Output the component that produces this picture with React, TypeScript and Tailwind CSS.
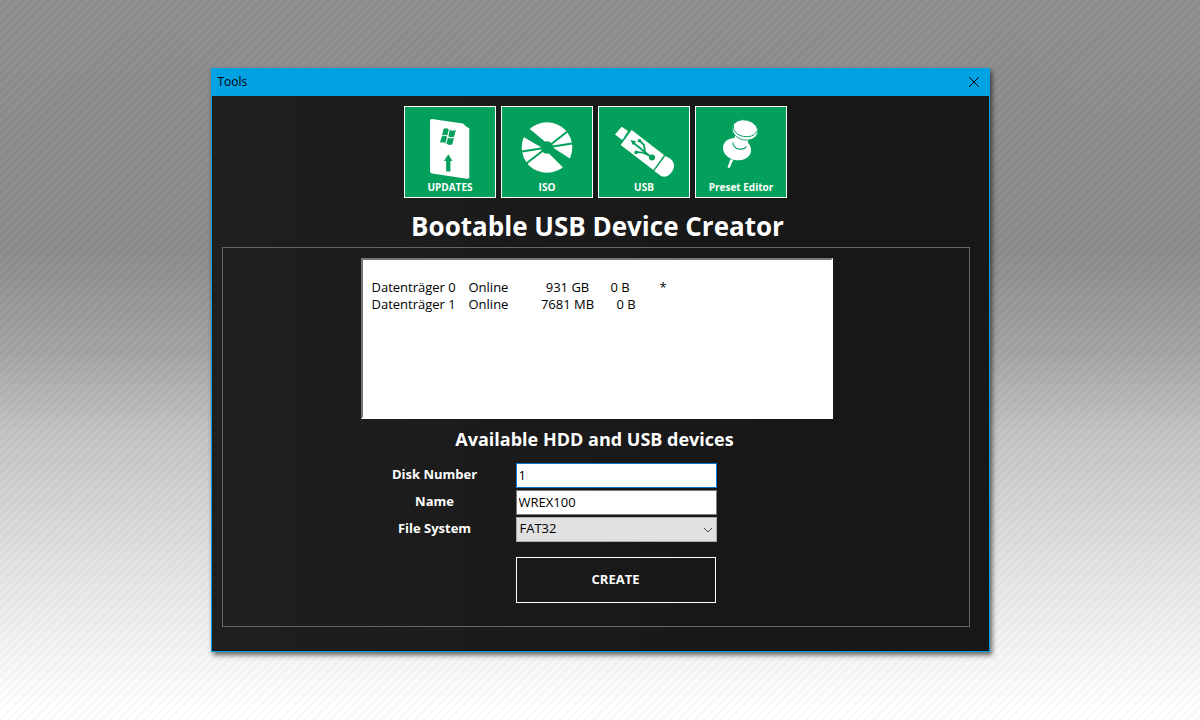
import React, { useState } from 'react';

interface Disk {
  name: string;
  status: string;
  size: string;
  free: string;
  gpt: string;
}

const disks: Disk[] = [
  { name: 'Datenträger 0', status: 'Online', size: '931 GB', free: '0 B', gpt: '*' },
  { name: 'Datenträger 1', status: 'Online', size: '7681 MB', free: '0 B', gpt: '' },
];

const iconClass = 'absolute inset-0 h-full w-full';

const UpdatesIcon = () => (
  <svg viewBox="0 0 90 90" className={iconClass} aria-hidden="true">
    <path d="M27 12 L58 16.5 Q60 19 64.3 21.5 V70 Q64.3 72 62 71.7 L27 66.5 Q25 66 25 64 V14 Q25 12 27 12Z" fill="#fff" />
    <g fill="#03a05c">
      <path d="M38.5 22 Q41 20.5 43.8 22.2 L42.3 28.6 Q39.8 27 37 28.4Z" />
      <path d="M44.8 22.8 Q47.5 24.6 50.8 23 L49.2 29.6 Q46.3 31 43.3 29.2Z" />
      <path d="M36.7 29.6 Q39.3 28 42 29.8 L40.4 36.2 Q38 34.4 35 35.8Z" />
      <path d="M43 30.4 Q46 32.2 49 30.8 L47.3 37.3 Q44.3 38.7 41.4 36.8Z" />
      <path d="M43.3 47.3 L47.5 54 H45.4 V64.5 H41.2 V54 H39Z" />
    </g>
  </svg>
);

const IsoIcon = () => (
  <svg viewBox="0 0 90 90" className={iconClass} aria-hidden="true">
    <circle cx="45" cy="40.5" r="25.3" fill="#fff" />
    <g fill="#03a05c">
      <path d="M26 20.5 L47 38 L43 42.5 L18 28Z" />
      <path d="M43 42.5 L62.5 62 L71 53.5 L47 38Z" />
      <circle cx="45" cy="40.5" r="6.2" />
    </g>
    <path d="M45 40.5 L17 45 M45 40.5 L23 57.5 M45 40.5 L67 23.3 M45 40.5 L73 36" stroke="#03a05c" strokeWidth="2" />
  </svg>
);

const UsbIcon = () => (
  <svg viewBox="0 0 90 90" className={iconClass} aria-hidden="true">
    <g fill="#fff">
      <path d="M22.7 19.7 L29 24 L23.3 33 L16 27.5Z" />
      <path d="M32.7 23 L65 48 L54.3 63 L21.7 38Z" />
      <path d="M66.3 49 L71 51.5 Q77 56 74 63 Q69 72 62 69 L55.3 64Z" />
    </g>
    <g fill="none" stroke="#03a05c" strokeWidth="1.8" strokeLinejoin="round">
      <path d="M53 50.7 L34 35.5" />
      <path d="M46 45 L45 38 L40.5 33.7" />
      <path d="M50 48.5 L44 45.7 L37 45.2" />
    </g>
    <g fill="#03a05c">
      <circle cx="53" cy="50.5" r="3" />
      <circle cx="40.5" cy="33.7" r="1.8" />
      <path d="M31.5 33 L37 34.3 L34 38.3Z" />
      <path d="M36 43.5 L39.3 44.3 L38 47.3 L35 46.4Z" />
    </g>
  </svg>
);

const PinIcon = () => (
  <svg viewBox="0 0 90 90" className={iconClass} aria-hidden="true">
    <path d="M37.3 52.5 L34.3 52.5 L31.5 60.7 L33.8 60.7Z" fill="#fff" />
    <ellipse cx="41" cy="42" rx="14.2" ry="11.2" transform="rotate(12 41 42)" fill="#fff" />
    <path d="M39.5 27 L37 37 Q42 45 50 41 L53 31Z" fill="#fff" />
    <path d="M37 35.5 Q37 41 43 42 Q48 43 50.5 39.5" fill="none" stroke="#03a05c" strokeWidth="1.2" />
    <ellipse cx="49" cy="23" rx="13" ry="10" transform="rotate(14 49 23)" fill="#fff" stroke="#03a05c" strokeWidth="0.8" />
    <path d="M37.5 19 C37 26 44 29.5 50 29.7 C56 29.8 59.5 27.5 60.5 24" fill="none" stroke="#03a05c" strokeWidth="1" />
  </svg>
);

const tools = [
  { label: 'UPDATES', icon: UpdatesIcon },
  { label: 'ISO', icon: IsoIcon },
  { label: 'USB', icon: UsbIcon },
  { label: 'Preset Editor', icon: PinIcon },
];

const fieldClass = 'block h-[25px] w-full border bg-white px-0.5 pb-0.5 text-[13px] text-black outline-none';
const labelClass = 'text-center text-[13px] font-bold leading-[22px]';

const App: React.FC = () => {
  const [diskNumber, setDiskNumber] = useState('1');
  const [name, setName] = useState('WREX100');
  const [fileSystem, setFileSystem] = useState('FAT32');

  return (
    <div className="min-h-screen bg-[repeating-linear-gradient(135deg,rgba(255,255,255,0.02)_0px,rgba(255,255,255,0.02)_3px,rgba(0,0,0,0.02)_3px,rgba(0,0,0,0.02)_6px),linear-gradient(to_bottom,#8e8e8e_0%,#8c8c8c_35%,#a4a4a4_49%,#c3c3c3_60%,#d4d4d4_70%,#e8e8e8_82%,#ffffff_98%)] px-4 py-[68px] font-['Open_Sans','Noto_Sans',sans-serif]">
      <main className="mx-auto max-w-[779px] border border-[#00a2e4] bg-[#171717] text-white shadow-[2px_3px_5px_rgba(0,0,0,0.6)]">
        <header className="flex h-[27px] items-center justify-between bg-[#00a2e4] pr-[7px] pb-0.5 pl-1.5 text-black">
          <h1 className="text-xs">Tools</h1>
          <button type="button" aria-label="Close" className="flex size-4 items-center justify-center">
            <svg viewBox="0 0 12 12" className="size-3" aria-hidden="true">
              <path d="M1 1 L11 11 M11 1 L1 11" stroke="#000" strokeWidth="1" />
            </svg>
          </button>
        </header>

        {/* woven fabric texture, lighter towards the left */}
        <div className="bg-[linear-gradient(to_right,transparent,rgba(20,20,20,0.7)_70%),conic-gradient(#262626_25%,#181818_0_50%,#262626_0_75%,#181818_0)] bg-[size:100%_100%,2px_2px] pt-2.5 pr-[19px] pb-6 pl-2.5">
          <nav className="flex flex-wrap justify-center gap-[5px]">
            {tools.map(({ label, icon: Icon }) => (
              <button
                key={label}
                type="button"
                className="relative flex size-[92px] items-end justify-center border border-white bg-[#03a05c] pb-1 text-[10px] leading-3 font-bold"
              >
                <Icon />
                <span className="relative">{label}</span>
              </button>
            ))}
          </nav>

          <h2 className="mt-2.5 pl-1 text-center text-[26px] leading-9 font-bold">Bootable USB Device Creator</h2>

          <section className="mt-[3px] border border-[#666] pt-2.5 pr-4 pb-[23px] pl-[18px]">
            <div className="mx-auto max-w-[472px]">
              <div className="h-[161px] border-2 border-t-[#777] border-r-white border-b-white border-l-[#777] bg-white px-[9px] pt-[19px] text-[13px] leading-[17px] text-black">
                <table aria-labelledby="devices-heading">
                  <tbody>
                    {disks.map((disk) => (
                      <tr key={disk.name}>
                        <td className="w-[97px]">{disk.name}</td>
                        <td className="w-[68px]">{disk.status}</td>
                        <td className="w-[62px] text-center">{disk.size}</td>
                        <td className={`w-[61px] ${disk.gpt ? 'pl-3' : 'pl-[18px]'}`}>{disk.free}</td>
                        <td>{disk.gpt}</td>
                      </tr>
                    ))}
                  </tbody>
                </table>
              </div>

              <h3 id="devices-heading" className="mt-2 pr-1 text-center text-lg leading-6 font-bold">
                Available HDD and USB devices
              </h3>

              <form
                className="mt-3 grid grid-cols-[148px_201px] gap-x-[7px] gap-y-0.5"
                onSubmit={(e) => e.preventDefault()}
              >
                <label htmlFor="disk-number" className={labelClass}>Disk Number</label>
                <input
                  id="disk-number"
                  value={diskNumber}
                  onChange={(e) => setDiskNumber(e.target.value)}
                  className={`${fieldClass} border-[#0078d7]`}
                />
                <label htmlFor="name" className={labelClass}>Name</label>
                <input
                  id="name"
                  value={name}
                  onChange={(e) => setName(e.target.value)}
                  className={`${fieldClass} border-[#7a7a7a]`}
                />
                <label htmlFor="file-system" className={labelClass}>File System</label>
                <div className="relative">
                  <select
                    id="file-system"
                    value={fileSystem}
                    onChange={(e) => setFileSystem(e.target.value)}
                    className="block h-[25px] w-full appearance-none border border-[#adadad] bg-[#e1e1e1] px-[3px] pb-0.5 text-[13px] text-black outline-none"
                  >
                    <option>FAT32</option>
                    <option>NTFS</option>
                  </select>
                  <svg viewBox="0 0 10 6" className="pointer-events-none absolute top-2.5 right-1 h-1.5 w-2.5" aria-hidden="true">
                    <path d="M1 1 L5 5 L9 1" fill="none" stroke="#444" strokeWidth="1" />
                  </svg>
                </div>
                <button
                  type="submit"
                  className="col-start-2 mt-[13px] h-[46px] w-[200px] border border-white text-[13px] font-bold"
                >
                  CREATE
                </button>
              </form>
            </div>
          </section>
        </div>
      </main>
    </div>
  );
};

export default App;
